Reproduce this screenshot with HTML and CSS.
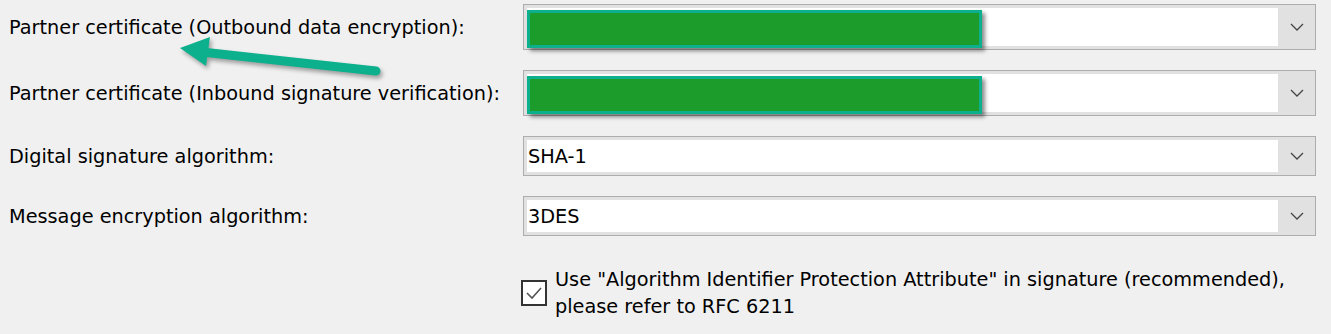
FILE: index.html
```html
<!DOCTYPE html>
<html>
	<head>
		<title>Partner security settings</title>
		<link rel="stylesheet" href="styles.css">
	</head>
	<body>
		<div class="form">
			<label class="caption">Partner certificate (Outbound data encryption):</label>
			<div class="combo tall">
				<div class="edit"></div>
				<div class="drop"><svg width="14" height="8" viewBox="0 0 14 8"><polyline points="1,1 7,7 13,1" /></svg></div>
				<div class="redact"></div>
			</div>

			<label class="caption">Partner certificate (Inbound signature verification):</label>
			<div class="combo tall">
				<div class="edit"></div>
				<div class="drop"><svg width="14" height="8" viewBox="0 0 14 8"><polyline points="1,1 7,7 13,1" /></svg></div>
				<div class="redact"></div>
			</div>

			<label class="caption">Digital signature algorithm:</label>
			<div class="combo">
				<div class="edit">SHA-1</div>
				<div class="drop"><svg width="14" height="8" viewBox="0 0 14 8"><polyline points="1,1 7,7 13,1" /></svg></div>
			</div>

			<label class="caption">Message encryption algorithm:</label>
			<div class="combo">
				<div class="edit">3DES</div>
				<div class="drop"><svg width="14" height="8" viewBox="0 0 14 8"><polyline points="1,1 7,7 13,1" /></svg></div>
			</div>

			<div class="check-row">
				<div class="checkbox"><svg width="22" height="22" viewBox="0 0 22 22"><polyline points="4,11 9,16 18,6" /></svg></div>
				<div class="check-text">Use "Algorithm Identifier Protection Attribute" in signature (recommended),<br>please refer to RFC 6211</div>
			</div>
		</div>

		<svg class="arrow" width="400" height="90" viewBox="0 0 400 90">
			<line x1="202" y1="52" x2="376" y2="71" />
			<polygon points="180,48 210,37 206,66" />
		</svg>
	</body>
</html>
```

FILE: styles.css
```css
body{
	margin: 0;
	background: #f0f0f0;
	font-family: "DejaVu Sans", Verdana, sans-serif;
	font-size: 19.3px;
	color: #000;
}
.form{
	display: grid;
	grid-template-columns: 514px 793px;
	row-gap: 20px;
	padding: 4px 0 0 9px;
}
.caption{
	display: flex;
	align-items: center;
}
.combo{
	position: relative;
	display: flex;
	height: 40px;
	box-sizing: border-box;
	border: 1px solid #adadad;
	background: #e1e1e1;
	padding: 3px 0 3px 3px;
}
.combo.tall{
	height: 46px;
}
.edit{
	flex: 1;
	background: #fff;
	display: flex;
	align-items: center;
	padding-left: 1px;
}
.drop{
	width: 37px;
	display: flex;
	align-items: center;
	justify-content: center;
}
.drop polyline{
	fill: none;
	stroke: #444;
	stroke-width: 1.3;
}
.redact{
	position: absolute;
	left: 3px;
	top: 5px;
	width: 449px;
	height: 32px;
	background: #1b9c2b;
	border: 3px solid #0cb08c;
	box-shadow: 3px 3px 4px rgba(0, 0, 0, 0.45);
}
.check-row{
	grid-column: 2;
	display: flex;
	align-items: center;
	gap: 8px;
	margin-top: 10px;
	margin-left: -2px;
}
.checkbox{
	width: 22px;
	height: 22px;
	border: 2px solid #333;
	background: #fff;
}
.checkbox polyline{
	fill: none;
	stroke: #555;
	stroke-width: 1.6;
}
.check-text{
	line-height: 27px;
}
.arrow{
	position: absolute;
	left: 0;
	top: 0;
	filter: drop-shadow(2px 3px 2px rgba(0, 0, 0, 0.35));
}
.arrow line{
	stroke: #0cb08c;
	stroke-width: 9;
	stroke-linecap: round;
}
.arrow polygon{
	fill: #0cb08c;
}
```
